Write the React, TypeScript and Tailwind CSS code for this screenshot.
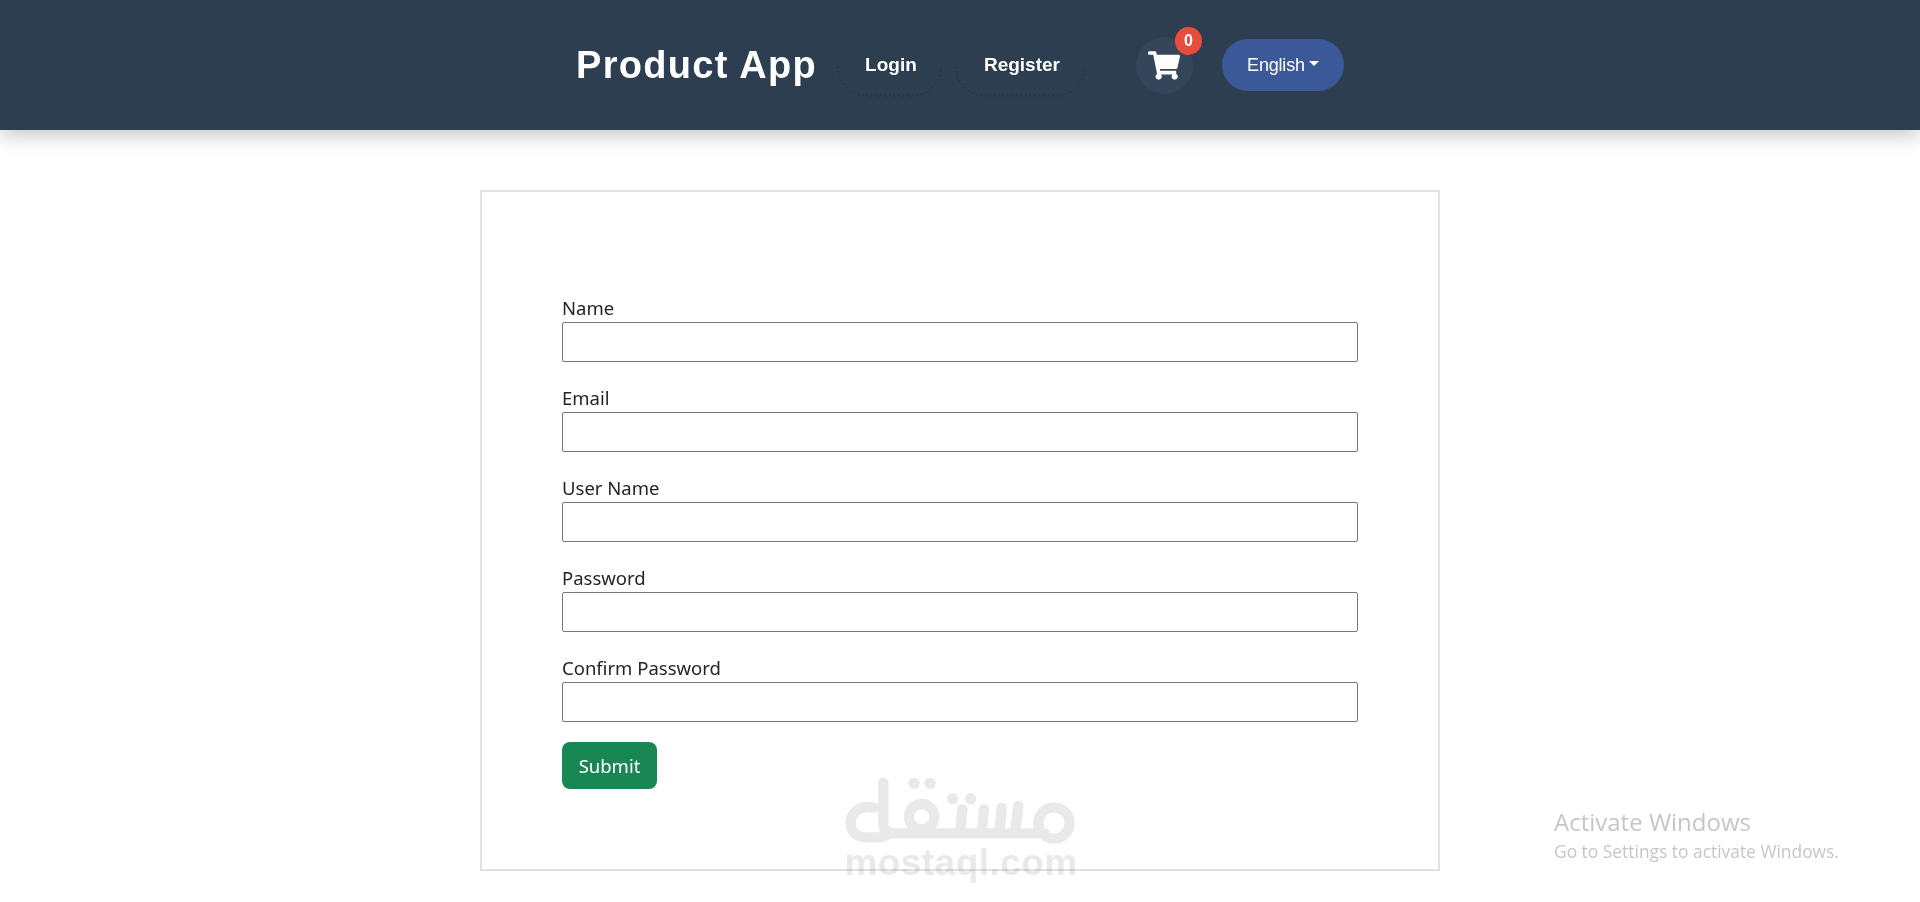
import { FaShoppingCart } from "react-icons/fa";

const fields = ["Name", "Email", "User Name", "Password", "Confirm Password"];

function Watermark() {
  return (
    <div className="absolute left-[845px] top-[776px] w-[232px] flex flex-col items-center pointer-events-none">
      <svg width="232" height="72" viewBox="195 50 696 216" fill="none" stroke="#e9e9e9" strokeWidth="31" strokeLinecap="round" strokeLinejoin="round">
        <path d="M283 145 C240 135 212 160 212 190 C212 220 235 234 262 234 L300 234 L335 222 L795 222" />
        <path d="M310 70 L310 195 C310 215 325 222 345 222" />
        <circle cx="425" cy="172" r="38" />
        <path d="M547 150 L540 222 M612 150 L605 222 M665 145 L658 222 M715 140 L705 222" />
        <circle cx="822" cy="191" r="47" />
        <g fill="#e9e9e9" stroke="none">
          <circle cx="402" cy="72" r="17" />
          <circle cx="450" cy="72" r="17" />
          <circle cx="518" cy="118" r="17" />
          <circle cx="572" cy="118" r="17" />
        </g>
      </svg>
      <span className="font-['Liberation_Sans',sans-serif] font-bold text-[37px] leading-[34px] tracking-[0.45px] text-[#e9e9e9] mix-blend-multiply whitespace-nowrap mt-[-2px]">mostaql.com</span>
    </div>
  );
}

function DottedArc() {
  return (
    <svg className="absolute left-0 bottom-0" width="105" height="32" viewBox="0 0 105 32" fill="none" stroke="#1c2733">
      <path d="M0.5 1 C2 16 12 28 26 29 L79 29 C93 28 103 16 104.5 1" strokeDasharray="1 3.5" />
      <path d="M33 31.5 L80 31.5" strokeDasharray="1 7" />
    </svg>
  );
}

function DottedArcWide() {
  return (
    <svg className="absolute left-0 bottom-0" width="131" height="32" viewBox="0 0 131 32" fill="none" stroke="#1c2733">
      <path d="M0.5 1 C2 16 12 28 26 29 L105 29 C119 28 129 16 130.5 1" strokeDasharray="1 3.5" />
      <path d="M33 31.5 L106 31.5" strokeDasharray="1 7" />
    </svg>
  );
}

export default function App() {
  return (
    <div className="relative h-[902px] overflow-hidden bg-white font-['Noto_Sans',sans-serif] text-[#212529]">
      <nav className="h-[130px] bg-[#2c3e50] shadow-[0_4px_20px_rgba(0,0,0,0.25)] flex items-center justify-center font-['Liberation_Sans',sans-serif] text-white">
        <span className="text-[38px] font-bold tracking-[1.3px] mr-[20px]">Product App</span>
        <a className="relative h-[66px] w-[105px] mt-[-1px] pl-[3px] pt-[2px] flex items-center justify-center text-[19px] font-bold">
          Login
          <DottedArc />
        </a>
        <a className="relative h-[66px] w-[131px] mt-[-1px] ml-[13px] pl-[3px] pt-[2px] flex items-center justify-center text-[19px] font-bold">
          Register
          <DottedArcWide />
        </a>
        <div className="relative ml-[50px] w-[57px] h-[57px] rounded-full bg-[#35465a] flex items-center justify-center">
          <FaShoppingCart className="w-[32px] h-[29px] text-white" />
          <span className="absolute left-[39px] top-[-10px] w-[27px] h-[28px] rounded-full bg-[#e74c3c] flex items-center justify-center text-[16px] font-bold">0</span>
          <svg className="absolute left-[50px] top-[2px]" width="20" height="18" viewBox="0 0 20 18" fill="none" stroke="#1c2733">
            <path d="M16.5 1 C17 9 11 15 4 16" strokeDasharray="1 3" />
          </svg>
        </div>
        <button className="ml-[29px] w-[122px] h-[52px] rounded-[26px] bg-[#3b5998] flex items-center justify-center text-[18px] tracking-[-0.2px]">
          English
          <span className="ml-[4px] mt-[-3px] w-0 h-0 border-x-[5px] border-x-transparent border-t-[5px] border-t-white" />
        </button>
      </nav>

      <main className="flex justify-center pt-[60px]">
        <form className="w-[960px] h-[681px] border-2 border-[#dee2e6] px-[80px] pt-[106px]">
          {fields.map((f) => (
            <div key={f} className="mb-[26px] flex flex-col">
              <label className="text-[18.5px] leading-[24px] mt-[-2px] mb-[2px]">{f}</label>
              <input className="h-[40px] w-full border border-[#767676] rounded-[2px] bg-white" />
            </div>
          ))}
          <button type="button" className="mt-[-6px] w-[95px] h-[47px] rounded-[8px] bg-[#198754] text-white text-[18.5px]">Submit</button>
        </form>
      </main>

      <Watermark />

      <div className="absolute left-[1554px] top-[805px] font-['Open_Sans',sans-serif] text-[#c6c6c6]">
        <div className="text-[24px] leading-[34px]">Activate Windows</div>
        <div className="text-[17.4px] leading-[24px]">Go to Settings to activate Windows.</div>
      </div>
    </div>
  );
}
